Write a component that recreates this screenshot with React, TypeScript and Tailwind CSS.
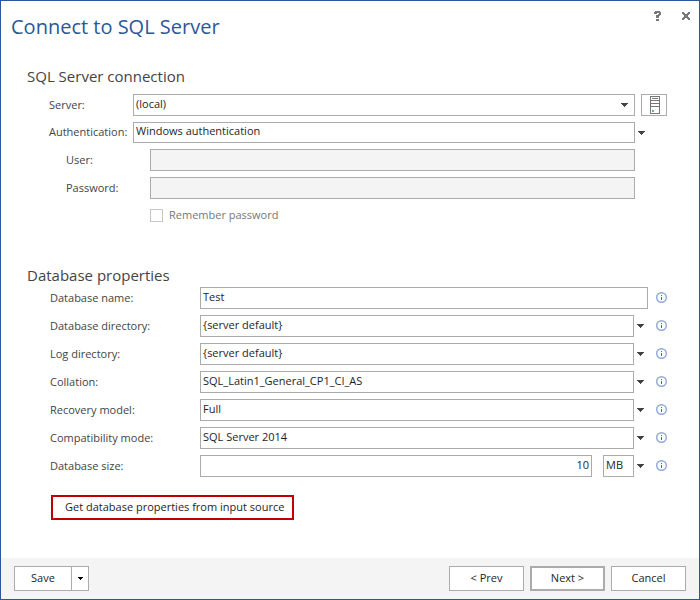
import { useState } from "react";
import type { ReactNode, SelectHTMLAttributes } from "react";

const fieldClass =
  "h-[22px] min-w-0 rounded-none border border-[#ababab] bg-white px-[2px] pb-[3px] text-[11px] leading-4 text-[#1e1e1e] outline-none focus:border-[#2b579a]";

const labelClass = "shrink-0 text-[11px] leading-4 text-[#444444]";

const footerButtonClass =
  "h-[25px] w-[75px] bg-white pb-[2px] text-[11px] leading-4 text-[#1e1e1e] hover:bg-[#e6f2fa]";

function Arrow({ className = "" }: { className?: string }) {
  return (
    <svg
      className={`h-1 w-[7px] shrink-0 ${className}`}
      viewBox="0 0 7 4"
      shapeRendering="crispEdges"
      fill="#444444"
      aria-hidden="true"
    >
      <path d="M0 0h7v1H0zM1 1h5v1H1zM2 2h3v1H2zM3 3h1v1H3z" />
    </svg>
  );
}

function InfoButton({ label }: { label: string }) {
  return (
    <button type="button" aria-label={`About ${label}`} className="block pb-px">
      <svg className="block size-[11px]" viewBox="0 0 11 11" fill="none">
        <circle cx="5.5" cy="5.5" r="4.8" stroke="#8faad3" strokeWidth="1.4" />
        <path d="M5 3h1v1H5zM5 5h1v3H5z" fill="#4a6ba0" />
      </svg>
    </button>
  );
}

function ServerIcon() {
  return (
    <svg className="block h-[18px] w-[10px]" viewBox="0 0 10 18" shapeRendering="crispEdges" aria-hidden="true">
      <path
        d="M0 0h10v18H0zM1 1v3h8V1zM1 5v2h8V5zM1 8v2h8V8zM1 11v6h8v-6z"
        fill="#777777"
        fillRule="evenodd"
      />
      <path d="M2 2h6v1H2z" fill="#777777" />
      <path d="M2 14h2v2H2z" fill="#6fab92" />
    </svg>
  );
}

function Select({ options, className = "", ...props }: { options: string[] } & SelectHTMLAttributes<HTMLSelectElement>) {
  return (
    <select className={`${fieldClass} appearance-none ${className}`} {...props}>
      {options.map((option) => (
        <option key={option}>{option}</option>
      ))}
    </select>
  );
}

function PropertyRow({ id, label, children }: { id: string; label: string; children: ReactNode }) {
  return (
    <div className="flex items-center">
      <label htmlFor={id} className={`${labelClass} w-[173px] pl-[23px]`}>
        {label}:
      </label>
      {children}
      <div className="flex w-[19px] shrink-0 justify-end">
        <InfoButton label={label} />
      </div>
    </div>
  );
}

const properties = [
  { id: "directory", label: "Database directory", options: ["{server default}"] },
  { id: "log", label: "Log directory", options: ["{server default}"] },
  { id: "collation", label: "Collation", options: ["SQL_Latin1_General_CP1_CI_AS"] },
  { id: "recovery", label: "Recovery model", options: ["Full", "Simple", "Bulk-logged"] },
  { id: "compatibility", label: "Compatibility mode", options: ["SQL Server 2014", "SQL Server 2012"] },
];

export default function App() {
  const [authentication, setAuthentication] = useState("Windows authentication");
  const windowsAuth = authentication === "Windows authentication";

  return (
    <div className="flex min-h-screen flex-col border border-[#2b579a] bg-white font-['Open_Sans','Noto_Sans',sans-serif]">
      <header className="flex items-start justify-between pt-[10px] pr-[9px] pl-[10px]">
        <h1 className="text-[20px] leading-8 text-[#2b579a]">Connect to SQL Server</h1>
        <div className="flex items-center gap-[21px]">
          <button type="button" aria-label="Help">
            <svg className="block h-[10px] w-[7px]" viewBox="0 0 7 10" shapeRendering="crispEdges" fill="#777777">
              <path d="M1 0h5v1h1v3H6v1H5v2H2V4h2V3h1V2H3v1H0V1h1zM2 8h3v2H2z" />
            </svg>
          </button>
          <button type="button" aria-label="Close">
            <svg className="block size-2" viewBox="0 0 8 8" shapeRendering="crispEdges" fill="#777777">
              <path d="M0 0h2v1h1v1h2V1h1V0h2v2H7v1H6v2h1v1h1v2H6V7H5V6H3v1H2v1H0V6h1V5h1V3H1V2H0z" />
            </svg>
          </button>
        </div>
      </header>

      <main className="flex-1 pr-8 pl-[26px]">
        <section className="pt-[23px]">
          <h2 className="text-[15px] leading-5 text-[#444444]">SQL Server connection</h2>
          <div className="mt-2 flex flex-col gap-[6px]">
            <div className="flex items-center">
              <label htmlFor="server" className={`${labelClass} w-[106px] pl-[22px]`}>
                Server:
              </label>
              <div className="relative flex flex-1">
                <Select id="server" options={["(local)"]} className="flex-1" />
                <Arrow className="pointer-events-none absolute top-[9px] right-[7px]" />
              </div>
              <button
                type="button"
                aria-label="Browse servers"
                className="ml-[6px] flex h-[22px] w-[26px] items-center justify-center border border-[#ababab] bg-white pl-[2px]"
              >
                <ServerIcon />
              </button>
            </div>
            <div className="flex h-[21px] items-center">
              <label htmlFor="authentication" className={`${labelClass} w-[106px] pb-px pl-[22px]`}>
                Authentication:
              </label>
              <Select
                id="authentication"
                options={["Windows authentication", "SQL Server authentication"]}
                value={authentication}
                onChange={(e) => setAuthentication(e.target.value)}
                className="max-h-full flex-1"
              />
              <Arrow className="mr-[22px] ml-[3px]" />
            </div>
            <div className="flex items-center pr-8">
              <label htmlFor="user" className={`${labelClass} w-[123px] pl-[39px]`}>
                User:
              </label>
              <input id="user" disabled={windowsAuth} className={`${fieldClass} flex-1 disabled:bg-[#f4f4f4]`} />
            </div>
            <div className="flex items-center pr-8">
              <label htmlFor="password" className={`${labelClass} w-[123px] pl-[39px]`}>
                Password:
              </label>
              <input
                id="password"
                type="password"
                disabled={windowsAuth}
                className={`${fieldClass} flex-1 disabled:bg-[#f4f4f4]`}
              />
            </div>
            <label className="mt-[2px] flex items-center gap-[6px] pl-[123px] text-[11px] leading-4 text-[#777777]">
              <input
                type="checkbox"
                disabled={windowsAuth}
                className="size-[13px] appearance-none border border-[#c6c6c6] bg-white checked:bg-[#2b579a]"
              />
              Remember password
            </label>
          </div>
        </section>

        <section className="pt-[42px]">
          <h2 className="text-[15px] leading-5 text-[#444444]">Database properties</h2>
          <div className="mt-[2px] flex flex-col gap-[6px]">
            <PropertyRow id="name" label="Database name">
              <input id="name" defaultValue="Test" className={`${fieldClass} flex-1`} />
            </PropertyRow>
            {properties.map(({ id, label, options }) => (
              <PropertyRow key={id} id={id} label={label}>
                <Select id={id} options={options} className="flex-1" />
                <Arrow className="mr-1 ml-[3px]" />
              </PropertyRow>
            ))}
            <PropertyRow id="size" label="Database size">
              <input id="size" defaultValue="10" className={`${fieldClass} flex-1 text-right`} />
              <Select aria-label="Size unit" options={["MB", "GB"]} className="ml-[11px] w-[31px]" />
              <Arrow className="mr-1 ml-[3px]" />
            </PropertyRow>
          </div>
          <button
            type="button"
            className="mt-[18px] ml-6 h-[25px] border-2 border-[#c00000] pr-2 pb-[2px] pl-3 text-[11px] leading-4 text-[#1e1e1e]"
          >
            Get database properties from input source
          </button>
        </section>
      </main>

      <footer className="flex items-center justify-between bg-[#f4f4f4] px-[13px] py-2">
        <div className="flex">
          <button
            type="button"
            className="h-[25px] w-[58px] border border-[#ababab] bg-white pb-[2px] text-[11px] leading-4 text-[#1e1e1e]"
          >
            Save
          </button>
          <button
            type="button"
            aria-label="Save options"
            className="-ml-px flex h-[25px] w-[18px] items-center justify-center border border-[#ababab] bg-white"
          >
            <svg className="h-[3px] w-[5px]" viewBox="0 0 5 3" shapeRendering="crispEdges" aria-hidden="true">
              <path d="M0 0h5v1H0zM1 1h3v1H1zM2 2h1v1H2z" />
            </svg>
          </button>
        </div>
        <div className="flex gap-[6px]">
          <button type="button" className={`${footerButtonClass} border border-[#ababab]`}>
            &lt; Prev
          </button>
          <button type="button" className={`${footerButtonClass} border-2 border-[#ababab]`}>
            Next &gt;
          </button>
          <button type="button" className={`${footerButtonClass} border border-[#ababab]`}>
            Cancel
          </button>
        </div>
      </footer>
    </div>
  );
}
